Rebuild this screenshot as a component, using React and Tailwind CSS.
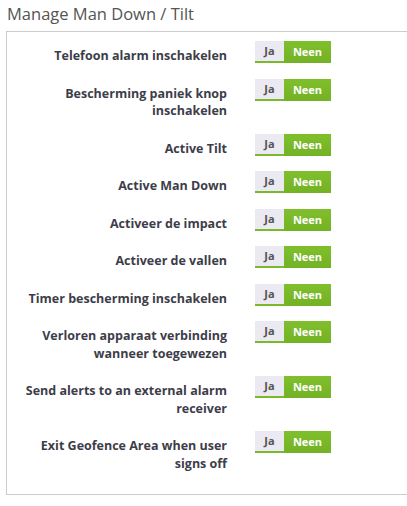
import React from "react";

const rows = [
  "Telefoon alarm inschakelen",
  "Bescherming paniek knop inschakelen",
  "Active Tilt",
  "Active Man Down",
  "Activeer de impact",
  "Activeer de vallen",
  "Timer bescherming inschakelen",
  "Verloren apparaat verbinding wanneer toegewezen",
  "Send alerts to an external alarm receiver",
  "Exit Geofence Area when user signs off",
];

function Toggle() {
  return (
    <div className="flex h-[22px] shrink-0 text-[11px] font-bold leading-[20px]">
      <div className="flex w-[29px] items-center justify-center border-b-2 border-[#7ab929] bg-[#ebe9f1] text-[#555]">
        Ja
      </div>
      <div className="flex w-[47px] items-center justify-center bg-gradient-to-b from-[#80bf2c] to-[#72b224] text-white">
        Neen
      </div>
    </div>
  );
}

export default function App() {
  return (
    <div
      className="w-[407px] h-[506px] bg-white overflow-hidden"
      style={{ fontFamily: '"Open Sans", "Liberation Sans", sans-serif' }}
    >
      <h1 className="pl-[7px] pt-[2px] text-[16.5px] leading-[24px] font-normal text-[#555]">
        Manage Man Down / Tilt
      </h1>
      <div className="ml-[6px] mt-[5px] w-[420px] border border-[#ccc] pl-[10px] pt-[9px] pb-[22px]">
        <div className="flex flex-col gap-[14px]">
          {rows.map((r) => (
            <div key={r} className="flex items-start">
              <div className="w-[210px] pt-[6px] text-right text-[12.5px] font-bold leading-[17.5px] text-[#3d3d4a]">
                {r}
              </div>
              <div className="ml-[28px]">
                <Toggle />
              </div>
            </div>
          ))}
        </div>
      </div>
    </div>
  );
}
